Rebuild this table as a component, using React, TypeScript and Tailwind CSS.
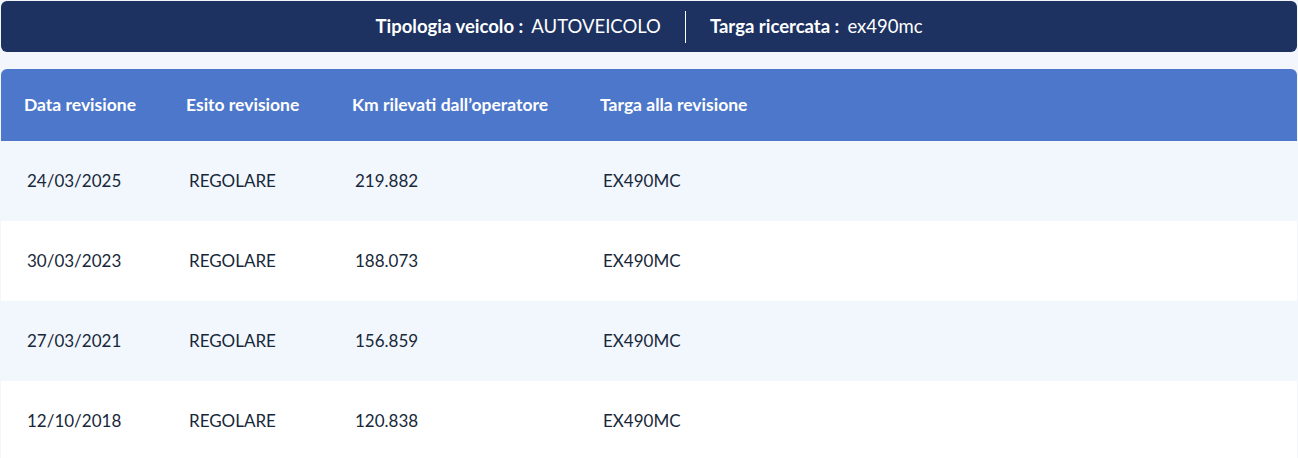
import React from 'react';

const rows = [
  { data: '24/03/2025', esito: 'REGOLARE', km: '219.882', targa: 'EX490MC' },
  { data: '30/03/2023', esito: 'REGOLARE', km: '188.073', targa: 'EX490MC' },
  { data: '27/03/2021', esito: 'REGOLARE', km: '156.859', targa: 'EX490MC' },
  { data: '12/10/2018', esito: 'REGOLARE', km: '120.838', targa: 'EX490MC' },
];

export default function App() {
  return (
    <div className="w-[1298px] h-[458px] overflow-hidden bg-[#f3f6fc] pt-px px-px font-['Lato','Noto_Sans',sans-serif]">
      {/* Vehicle summary bar */}
      <div className="h-[51px] bg-[#1d3261] rounded-md flex items-center justify-center text-white text-[18.5px]">
        <span className="font-bold">Tipologia veicolo :</span>
        <span className="ml-2">AUTOVEICOLO</span>
        <span className="w-px h-[32px] bg-white mx-[24px]"></span>
        <span className="font-bold">Targa ricercata :</span>
        <span className="ml-2">ex490mc</span>
      </div>

      {/* Revision table */}
      <div className="mt-[17px]">
        <div className="h-[72px] bg-[#4d77ca] rounded-t-md flex items-center text-white font-bold text-[17.5px] pl-[23px]">
          <div className="w-[162px]">Data revisione</div>
          <div className="w-[166px]">Esito revisione</div>
          <div className="w-[248px]">Km rilevati dall’operatore</div>
          <div>Targa alla revisione</div>
        </div>
        {rows.map((r, i) => (
          <div
            key={i}
            className={`h-[80px] flex items-center text-[17px] text-[#17283a] pl-[26px] ${i % 2 === 0 ? 'bg-[#f2f6fd]' : 'bg-white'}`}
          >
            <div className="w-[162px]">{r.data}</div>
            <div className="w-[166px]">{r.esito}</div>
            <div className="w-[248px]">{r.km}</div>
            <div>{r.targa}</div>
          </div>
        ))}
      </div>
    </div>
  );
}
